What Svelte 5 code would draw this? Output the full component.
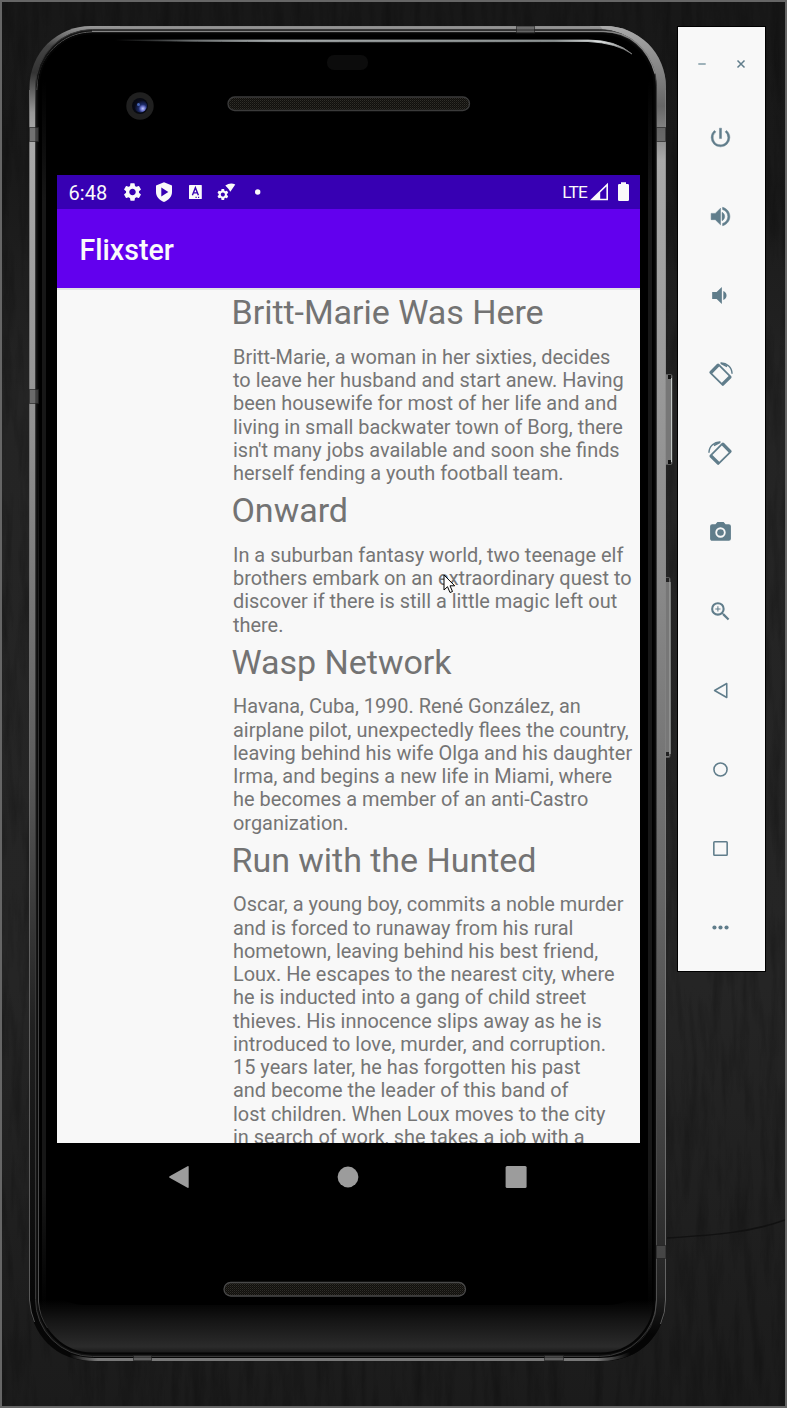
<script>
  const movies = [
    {
      title: 'Britt-Marie Was Here',
      overview: `Britt-Marie, a woman in her sixties, decides
to leave her husband and start anew. Having
been housewife for most of her life and and
living in small backwater town of Borg, there
isn't many jobs available and soon she finds
herself fending a youth football team.`
    },
    {
      title: 'Onward',
      overview: `In a suburban fantasy world, two teenage elf
brothers embark on an extraordinary quest to
discover if there is still a little magic left out
there.`
    },
    {
      title: 'Wasp Network',
      overview: `Havana, Cuba, 1990. René González, an
airplane pilot, unexpectedly flees the country,
leaving behind his wife Olga and his daughter
Irma, and begins a new life in Miami, where
he becomes a member of an anti-Castro
organization.`
    },
    {
      title: 'Run with the Hunted',
      overview: `Oscar, a young boy, commits a noble murder
and is forced to runaway from his rural
hometown, leaving behind his best friend,
Loux. He escapes to the nearest city, where
he is inducted into a gang of child street
thieves. His innocence slips away as he is
introduced to love, murder, and corruption.
15 years later, he has forgotten his past
and become the leader of this band of
lost children. When Loux moves to the city
in search of work, she takes a job with a`
    }
  ];
  const gear =
    'M19.14 12.94c.04-.3.06-.61.06-.94 0-.32-.02-.64-.07-.94l2.03-1.58a.49.49 0 0 0 .12-.61l-1.92-3.32a.488.488 0 0 0-.59-.22l-2.39.96c-.5-.38-1.03-.7-1.62-.94l-.36-2.54a.484.484 0 0 0-.48-.41h-3.84c-.24 0-.43.17-.47.41l-.36 2.54c-.59.24-1.13.57-1.62.94l-2.39-.96c-.22-.08-.47 0-.59.22L2.74 8.87c-.12.21-.08.47.12.61l2.03 1.58c-.05.3-.09.63-.09.94s.02.64.07.94l-2.03 1.58a.49.49 0 0 0-.12.61l1.92 3.32c.12.22.37.29.59.22l2.39-.96c.5.38 1.03.7 1.62.94l.36 2.54c.05.24.24.41.48.41h3.84c.24 0 .44-.17.47-.41l.36-2.54c.59-.24 1.13-.56 1.62-.94l2.39.96c.22.08.47 0 .59-.22l1.92-3.32c.12-.22.07-.47-.12-.61l-2.01-1.58zM12 15.6c-1.98 0-3.6-1.62-3.6-3.6s1.62-3.6 3.6-3.6 3.6 1.62 3.6 3.6-1.62 3.6-3.6 3.6z';
</script>

{#snippet rotatedDevice()}
  <path transform="rotate(-45 12 12)" fill-rule="evenodd" d="M7 2.500h9.700q1.500 0 1.500 1.500v16.200q0 1.500-1.500 1.500H7q-1.500 0-1.500-1.500V4q0-1.500 1.500-1.500zM7.200 5.700v12.800h9.300V5.700z" />
  <path d="M12 .9C17.800 .5 23 5 23.100 11.300M12.300 1.200l6 3.200" fill="none" stroke="#607d8b" stroke-width="1.400" />
{/snippet}

<main class="desktop">
  <svg class="grain" width="783" height="1404" aria-hidden="true">
    <filter id="wood" x="0" y="0" width="100%" height="100%">
      <feTurbulence type="fractalNoise" baseFrequency="0.1 0.012" numOctaves="4" seed="7" />
      <feColorMatrix values="0 0 0 0 0  0 0 0 0 0  0 0 0 0 0  2.4 0 0 0 -1.05" />
    </filter>
    <rect width="783" height="1404" filter="url(#wood)" opacity=".22" />
    <path d="M665 1236c50-3 85-6 118-18" fill="none" stroke="#111" stroke-width="1.5" />
  </svg>

  <section class="phone">
    <svg class="frame" width="644" height="1335" viewBox="29 26 644 1335" aria-hidden="true">
      <defs>
        <linearGradient id="rail" x1="0" y1="26" x2="0" y2="1361" gradientUnits="userSpaceOnUse">
          <stop offset="0" stop-color="#999" /><stop offset=".015" stop-color="#444" />
          <stop offset=".035" stop-color="#333" /><stop offset=".065" stop-color="#999" />
          <stop offset=".08" stop-color="#aaa" /><stop offset=".3" stop-color="#929292" />
          <stop offset=".55" stop-color="#5d5d5d" /><stop offset=".75" stop-color="#202020" />
          <stop offset=".95" stop-color="#070707" /><stop offset="1" stop-color="#060606" />
        </linearGradient>
        <linearGradient id="railRight" x1="0" y1="26" x2="0" y2="1361" gradientUnits="userSpaceOnUse">
          <stop offset="0" stop-color="#aaa" /><stop offset=".06" stop-color="#666" />
          <stop offset=".1" stop-color="#aaa" /><stop offset=".4" stop-color="#8c8c8c" />
          <stop offset=".65" stop-color="#666" /><stop offset=".85" stop-color="#3c3c3c" />
          <stop offset=".95" stop-color="#222" /><stop offset=".98" stop-color="#050505" />
        </linearGradient>
        <linearGradient id="foot" x1="70" x2="630" y1="0" y2="0" gradientUnits="userSpaceOnUse">
          <stop offset="0" stop-color="#8c8c8c" stop-opacity="0" /><stop offset=".05" stop-color="#777" />
          <stop offset=".94" stop-color="#777" /><stop offset="1" stop-color="#777" stop-opacity="0" />
        </linearGradient>
        <linearGradient id="chin" x1="0" y1="1300" x2="0" y2="1355" gradientUnits="userSpaceOnUse">
          <stop offset="0" stop-color="#000" /><stop offset=".35" stop-color="#141414" />
          <stop offset=".85" stop-color="#2b2b2b" /><stop offset="1" stop-color="#141414" />
        </linearGradient>
        <linearGradient id="side" x1="0" y1="80" x2="0" y2="1310" gradientUnits="userSpaceOnUse">
          <stop offset="0" stop-color="#171717" stop-opacity="0" /><stop offset=".1" stop-color="#171717" />
          <stop offset=".9" stop-color="#171717" /><stop offset="1" stop-color="#171717" stop-opacity="0" />
        </linearGradient>
        <linearGradient id="edge" x1="0" y1="400" x2="0" y2="1350" gradientUnits="userSpaceOnUse">
          <stop offset="0" stop-color="#484848" stop-opacity="0" /><stop offset=".5" stop-color="#404040" />
          <stop offset=".95" stop-color="#505050" /><stop offset="1" stop-color="#484848" stop-opacity="0" />
        </linearGradient>
        <linearGradient id="shine" x1="115" x2="632" y1="0" y2="0" gradientUnits="userSpaceOnUse">
          <stop offset="0" stop-color="#000" /><stop offset=".15" stop-color="#6b6f70" />
          <stop offset=".3" stop-color="#a5aaab" /><stop offset=".85" stop-color="#8b9191" />
          <stop offset=".94" stop-color="#dfe3e3" /><stop offset="1" stop-color="#777" />
        </linearGradient>
        <radialGradient id="lens" cx=".68" cy=".7" r=".65">
          <stop offset="0" stop-color="#c4ccff" /><stop offset=".25" stop-color="#7078cf" />
          <stop offset=".5" stop-color="#1c2a68" /><stop offset="1" stop-color="#080a18" />
        </radialGradient>
        <pattern id="mesh" width="2" height="2" patternUnits="userSpaceOnUse">
          <rect width="2" height="2" fill="#100f0c" /><rect width="1" height="1" fill="#302e29" />
          <rect x="1" y="1" width="1" height="1" fill="#211f1b" />
        </pattern>
      </defs>

      <g stroke="#5b5b5b">
        <rect x="664.5" y="374.5" width="7.5" height="90" rx="1.5" fill="#777" />
        <path d="M671.5 378v84" stroke="#c0c6c3" /><path d="M669.500 375v4M669.500 460v4" stroke="#111" stroke-width="3" />
        <rect x="664.5" y="577.5" width="5.5" height="180" rx="1.5" fill="#777" />
        <path d="M670 582v172" stroke="#b8bbb9" /><path d="M667.500 578v4M667.500 752v4" stroke="#222" stroke-width="3" />
      </g>

      <rect x="29.500" y="26" width="636.500" height="1335" rx="61" fill="url(#rail)" />
      <path d="M600 26h5a61 61 0 0 1 61 61v1213a61 61 0 0 1-61 61h-5l52-60V90z" fill="url(#railRight)" />
      <path d="M120 26.500h470" stroke="#8d8d8d" />
      <path d="M70 1355.500q13 4 25 4h505q16 0 30-6" fill="none" stroke="url(#foot)" stroke-width="3" />
      <rect x="35.5" y="29.5" width="621" height="1327" rx="57" fill="#141414" stroke="#383838" />
      <path d="M92 31.5h511c27 0 45 17 52 42" fill="none" stroke="#858585" stroke-width="1.4" />
      <path d="M37 90c2-34 24-57 55-58" fill="none" stroke="#676767" />
      <rect x="38.5" y="33.5" width="616" height="1320" rx="54" fill="url(#chin)" stroke="#050505" stroke-width="2" />
      <path d="M47 600V1260q0 44 38 45h520q42 0 42-45V600z" fill="#000" />
      <rect x="42" y="80" width="4" height="1230" fill="url(#side)" />
      <rect x="648" y="80" width="4" height="1230" fill="url(#side)" />
      <path d="M38.5 420v882q1 14 9 26" fill="none" stroke="url(#edge)" />
      <path d="M656.500 500v800q0 30-24 48" fill="none" stroke="url(#edge)" />
      <path d="M29.500 90v1210q1 13 5 22" fill="none" stroke="#888" stroke-opacity=".6" />
      <path d="M665.500 90v1210q0 13-5 24" fill="none" stroke="#858585" stroke-opacity=".65" />

      <g fill="#555" fill-opacity=".65" stroke="#202020" stroke-opacity=".65">
        <rect x="29.5" y="127.5" width="9" height="14" /><rect x="29.5" y="389.5" width="9" height="14" />
        <rect x="656.5" y="127.5" width="9" height="14" /><rect x="656.5" y="1245.5" width="9" height="13" />
        <rect x="516.5" y="26" width="18" height="7" />
        <rect x="133.5" y="1355.5" width="18" height="5" /><rect x="544.5" y="1355.5" width="19" height="5" />
      </g>

      <path d="M115 40h473q28 0 44 14-15-11-44-12.5Q200 42.500 115 40z" fill="url(#shine)" stroke="url(#shine)" stroke-width=".8" />
      <rect x="327" y="55" width="41" height="15" rx="7" fill="#0c0c0c" />
      <circle cx="140" cy="106" r="13.7" fill="#202020" />
      <circle cx="140" cy="106" r="8" fill="#070912" />
      <circle cx="140.500" cy="106" r="6.5" fill="url(#lens)" />
      <circle cx="138.500" cy="104.500" r="1.5" fill="#4766b8" />
      <rect x="228" y="97" width="241.500" height="13.500" rx="6.7" fill="url(#mesh)" stroke="#3b3b3b" stroke-width="1.3" />
      <rect x="224" y="1282.500" width="241.500" height="13.500" rx="6.7" fill="url(#mesh)" stroke="#494949" stroke-width="1.3" />
    </svg>

    <div class="screen">
      <header class="status">
        <span class="clock">6:48</span>
        <svg class="notices" width="144" height="24" viewBox="120 180 144 24" fill="#fafafa">
          <path transform="translate(121.700 181.200) scale(.9)" d={gear} />
          <path d="M164 182.300 156 185.500v6.500c0 4.600 3.300 8.300 8 9.900 4.700-1.600 8-5.300 8-9.900v-6.500zM161.300 187.500l7 4.500-7 4.500z" fill-rule="evenodd" />
          <rect x="189" y="185" width="12.800" height="14" rx=".6" />
          <path d="M192.400 195.300 195.400 187.700 198.400 195.300M193.500 192.900h3.800M195.500 197.400h1.200M198 197.400h1.200" fill="none" stroke="#3700b3" stroke-width="1.4" />
          <path transform="translate(216 187.700) scale(.57)" d={gear} />
          <path d="M225.300 185.500q5-3.300 10-1l-5 7.300q-1.500-3-5-6.300z" />
          <circle cx="257.700" cy="192" r="2.7" />
        </svg>
        <span class="lte">LTE</span>
        <svg class="signals" width="42" height="24" viewBox="589 180 42 24">
          <path fill-rule="evenodd" d="M590 200.300 608 182.700v17.600zM600.200 198.700h6.200V186.500l-6.200 6.100z" fill="#fafafa" />
          <path d="M621 184v-1.800h5v1.800h1.700q1.300 0 1.300 1.300v14.400q0 1.300-1.300 1.300h-8.400q-1.300 0-1.300-1.300v-14.400q0-1.300 1.300-1.300z" fill="#fafafa" />
        </svg>
      </header>
      <h1>Flixster</h1>
      <div class="list">
        {#each movies as movie}
          <article>
            <h2>{movie.title}</h2>
            <p>{movie.overview}</p>
          </article>
        {/each}
      </div>
    </div>

    <nav>
      <svg width="22" height="24" viewBox="0 0 22 24"><path d="M1.600 11.300 19.500 1.200q1.200-.5 1.200.8v20q0 1.300-1.200.8L1.600 12.700q-1.200-.7 0-1.400z" fill="#9c9c9c" /></svg>
      <svg width="22" height="24" viewBox="0 0 22 24"><circle cx="11" cy="12" r="10.400" fill="#9c9c9c" /></svg>
      <svg width="22" height="24" viewBox="0 0 22 24"><rect x=".6" y="1" width="21" height="22" rx="1.500" fill="#9c9c9c" /></svg>
    </nav>

    <svg class="cursor" width="13" height="20" viewBox="0 0 13 20" aria-hidden="true">
      <path d="M1 1v15l3.500-3.300L7 18.500l2.500-1-2.500-5.700h4.700z" fill="#fff" stroke="#000" stroke-width="1" />
    </svg>
  </section>

  <aside>
    <div class="window">
      <svg width="12" height="12" viewBox="0 0 12 12"><path d="M2.300 6h7.400" stroke="#87a0aa" stroke-width="1.600" /></svg>
      <svg width="12" height="12" viewBox="0 0 12 12"><path d="m2.500 2.500 7 7m0-7-7 7" stroke="#607d8b" stroke-width="1.500" /></svg>
    </div>
    <div class="tools">
      <svg viewBox="0 0 24 24"><path d="M13 3h-2v10h2V3zm4.830 2.170-1.420 1.420A6.920 6.920 0 0 1 19 12c0 3.870-3.130 7-7 7A6.995 6.995 0 0 1 7.580 6.580L6.170 5.170A8.932 8.932 0 0 0 3 12a9 9 0 0 0 18 0c0-2.740-1.230-5.180-3.170-6.830z" stroke="#607d8b" stroke-width=".4" /></svg>
      <svg viewBox="0 0 24 24"><path d="M3 9v6h4l5 5V4L7 9zm10.500-1v8c1.500-.7 2.500-2.200 2.500-4s-1-3.300-2.500-4zM14 3.200v2.100c2.900.9 5 3.500 5 6.700s-2.100 5.800-5 6.700v2.100c4-1 7-4.500 7-8.800s-3-7.800-7-8.800z" stroke="#607d8b" stroke-width=".5" /></svg>
      <svg viewBox="0 0 24 24"><path d="M4 8.700v6.600h4.300l5 4.900V3.800l-5 4.900zm10.700-1v8.600c1.900-.7 3.100-2.300 3.100-4.300s-1.200-3.600-3.100-4.300z" /></svg>
      <svg viewBox="0 0 24 24">{@render rotatedDevice()}</svg>
      <svg viewBox="0 0 24 24"><g transform="translate(24 0) scale(-1 1)">{@render rotatedDevice()}</g></svg>
      <svg viewBox="0 0 24 24"><circle cx="12" cy="12" r="3.200" /><path d="M9 2 7.170 4H4a2 2 0 0 0-2 2v12c0 1.100.9 2 2 2h16a2 2 0 0 0 2-2V6a2 2 0 0 0-2-2h-3.170L15 2zm3 15a5 5 0 1 1 0-10 5 5 0 0 1 0 10z" /></svg>
      <svg viewBox="0 0 24 24"><path d="M15.500 14h-.79l-.28-.27A6.470 6.470 0 0 0 16 9.500 6.500 6.500 0 1 0 9.500 16c1.610 0 3.090-.59 4.230-1.570l.27.28v.79l5 4.990L20.490 19zm-6 0a4.500 4.500 0 1 1 0-9 4.500 4.500 0 0 1 0 9zm2.500-4h-2v2H9v-2H7V9h2V7h1v2h2z" /></svg>
      <svg viewBox="0 0 24 24"><path d="M18 5.300v13.400L6.300 12z" fill="none" stroke="#607d8b" stroke-width="1.500" stroke-linejoin="round" /></svg>
      <svg viewBox="0 0 24 24"><circle cx="12" cy="12" r="6.300" fill="none" stroke="#607d8b" stroke-width="1.500" /></svg>
      <svg viewBox="0 0 24 24"><rect x="5.600" y="5.600" width="12.800" height="12.800" rx=".7" fill="none" stroke="#607d8b" stroke-width="1.500" /></svg>
      <svg viewBox="0 0 24 24"><circle cx="6.200" cy="12" r="2" /><circle cx="12" cy="12" r="2" /><circle cx="17.800" cy="12" r="2" /></svg>
    </div>
  </aside>
</main>

<style>
  :global(body) { margin: 0; }
  .desktop {
    position: relative;
    display: flex;
    align-items: flex-start;
    box-sizing: border-box;
    width: 787px;
    height: 1408px;
    padding: 24px 0 0 27px;
    border: 2px solid #666;
    background: linear-gradient(#181818, #191919 12%, #242424 28%, #252525 70%, #1e1e1e 90%, #1b1b1b);
    font-family: Roboto, sans-serif;
    overflow: hidden;
  }
  .grain { position: absolute; inset: 0; }
  .phone {
    position: relative;
    flex: none;
    box-sizing: border-box;
    width: 637px;
    height: 1335px;
    padding: 149px 0 0 28px;
  }
  .frame { position: absolute; top: 0; left: 0; }
  .screen {
    position: relative;
    display: flex;
    flex-direction: column;
    width: 583px;
    height: 968px;
    background: #f8f8f8;
    overflow: hidden;
  }
  .status {
    display: flex;
    align-items: center;
    flex: none;
    box-sizing: border-box;
    height: 34px;
    padding: 0 9px 0 11.500px;
    background: #3700b3;
    color: #fafafa;
  }
  .clock { width: 51.500px; font-size: 20px; line-height: 34px; letter-spacing: .1px; padding-top: 1px; }
  .lte { margin-left: auto; font-size: 17.3px; letter-spacing: -.8px; padding-right: 2px; }
  h1 {
    flex: none;
    height: 79px;
    margin: 0;
    padding: 2px 0 0 22.500px;
    box-sizing: border-box;
    background: #6200ee;
    box-shadow: 0 2px 0 #e2e2e4;
    color: #fafafa;
    font-size: 28.6px;
    font-weight: 500;
    line-height: 79px;
    position: relative;
  }
  .list { padding: 4.400px 0 0 174.500px; }
  h2 {
    margin: 0;
    color: #737373;
    font-size: 34.05px;
    font-weight: 400;
    line-height: 40px;
    letter-spacing: -.05px;
  }
  p {
    margin: 0;
    padding: 13.600px 0 4.900px 1.500px;
    color: #757575;
    font-size: 19.93px;
    line-height: 23.25px;
    white-space: pre;
  }
  nav {
    position: relative;
    display: flex;
    justify-content: space-between;
    padding: 22px 139px 0 111px;
  }
  .cursor { position: absolute; left: 414px; top: 548px; }
  aside {
    position: relative;
    flex: none;
    width: 87px;
    height: 944px;
    margin: 1px 0 0 12px;
    background: #f8f8f8;
    box-shadow: 0 0 0 1px #000;
  }
  .window {
    display: flex;
    justify-content: space-between;
    padding: 31px 18px 0;
  }
  .tools {
    display: grid;
    grid-auto-rows: 79px;
    place-items: center;
    padding: 28px 2px 0 0;
  }
  .tools svg { width: 25px; height: 25px; fill: #607d8b; overflow: visible; }
</style>
